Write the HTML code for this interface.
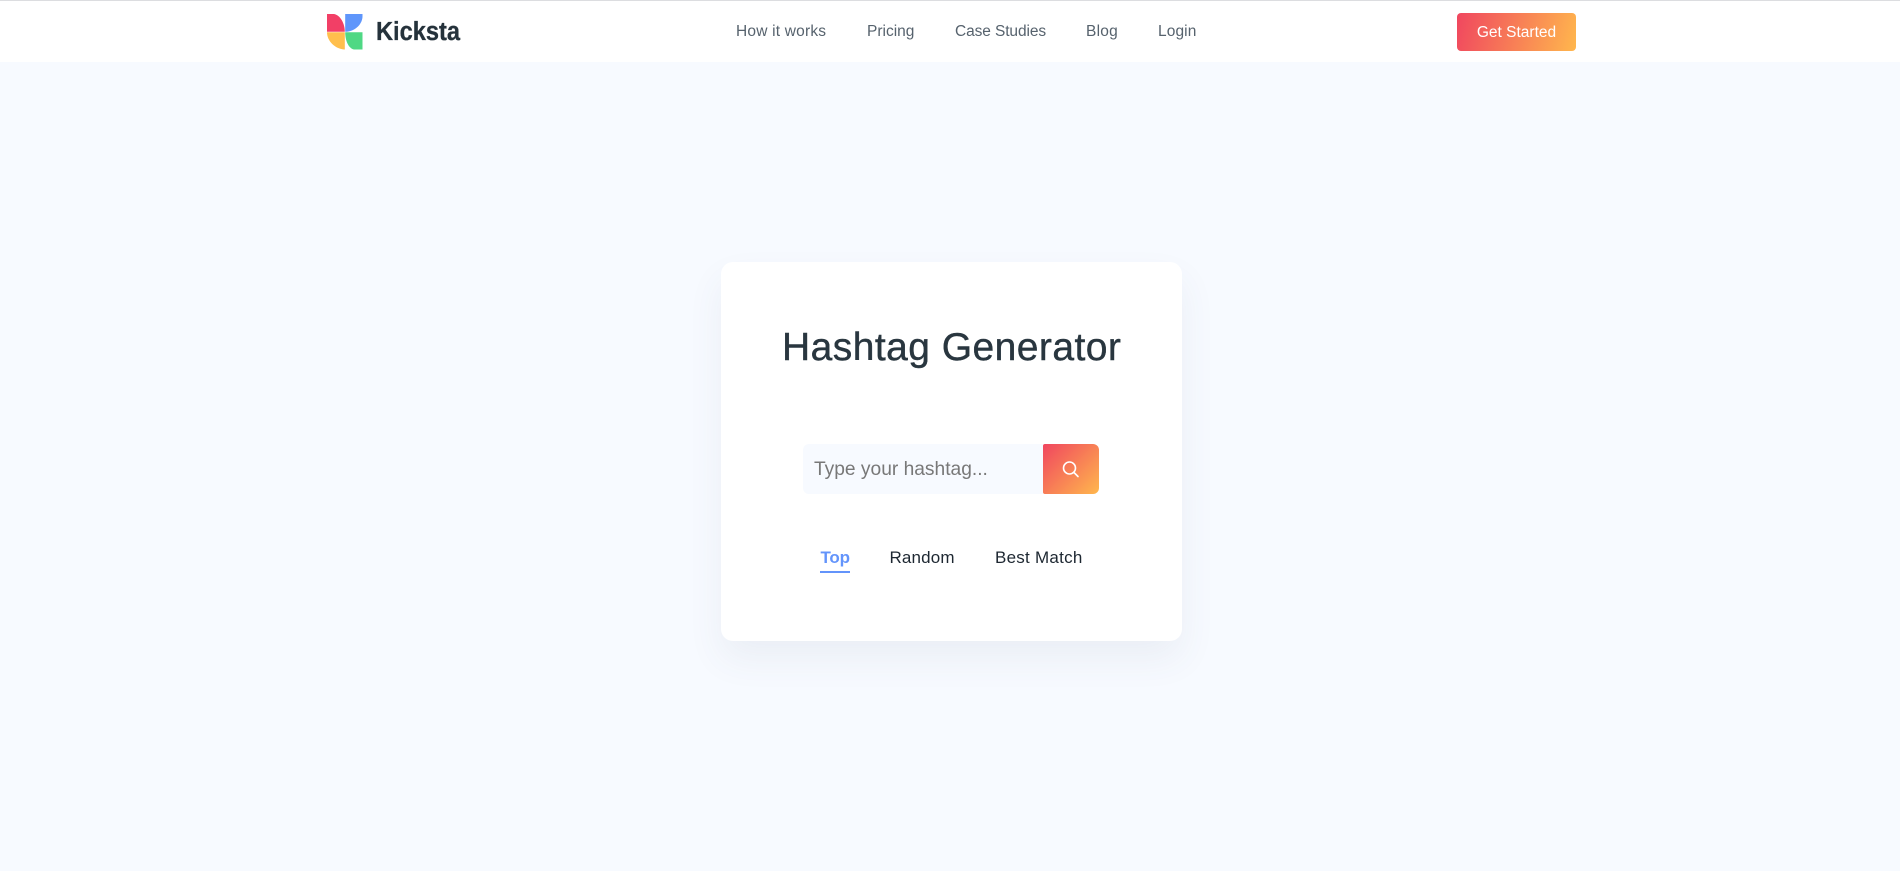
<!DOCTYPE html>
<html lang="en">
<head>
<meta charset="utf-8">
<title>Hashtag Generator - Kicksta</title>
<style>
*{box-sizing:border-box;margin:0;padding:0}
html,body{width:1900px;height:871px;overflow:hidden}
body{background:#f7faff;font-family:"Liberation Sans",sans-serif;position:relative}
a{text-decoration:none;color:inherit}
.t{position:absolute;white-space:nowrap;line-height:20px}
header{position:absolute;left:0;top:0;width:1900px;height:62px;background:#fff;border-top:1px solid #dcdde0}
.nav{color:#56626d;font-size:15.5px;top:22px}
.logo{position:absolute;left:327px;top:14px}
.word{position:absolute;left:375px;top:14px}
.cta{position:absolute;left:1457px;top:13px;width:119px;height:38px;border-radius:4px;background:linear-gradient(105deg,#f0465f,#ffb74d);color:#fff;font-size:15.5px;line-height:39px;text-align:center}
.card{position:absolute;left:721px;top:262px;width:461px;height:379px;background:#fff;border-radius:12px;box-shadow:0 18px 36px rgba(70,90,120,.07)}
h1{position:absolute;left:782px;top:325px;font-weight:400;font-size:39px;line-height:46px;color:#29363f;white-space:nowrap;letter-spacing:.45px;-webkit-text-stroke:.4px #29363f}
.field{position:absolute;left:803px;top:444px;width:240px;height:50px;background:#f7faff;border-radius:6px 0 0 6px}
.ph{left:814px;top:460px;font-size:19.2px;color:#787878}
.go{position:absolute;left:1043px;top:444px;width:56px;height:50px;border-radius:2px 6px 6px 2px;background:linear-gradient(135deg,#f0465f,#ffb74d)}
.tab{top:548px;font-size:17px;color:#1d2731}
.tab.on{color:#6394fb;font-weight:700}
.ul{position:absolute;left:820px;top:571px;width:30px;height:2px;background:#6394fb}
</style>
</head>
<body>
<header>
</header>
<svg class="logo" width="36" height="36" viewBox="0 0 36 36" aria-hidden="true">
<path d="M0 0H7C13 1 17.800 9 17.800 17.800H0Z" fill="#f23f66"/>
<path d="M18.200 0H35.500V3C35 11 27 17.800 18.200 17.800Z" fill="#5f96fb"/>
<path d="M0 18.200H17.800V35.500C8 35 0 27 0 18.200Z" fill="#ffbf4d"/>
<path d="M18.200 18.200H35.500V35.500H27C21 34 18.200 26 18.200 18.200Z" fill="#4fd884"/>
</svg>
<svg class="word" width="90" height="36" viewBox="0 0 90 36">
<text x="1" y="26" font-family="Liberation Sans" font-weight="700" font-size="25.500" fill="#25323b" stroke="#25323b" stroke-width=".3" textLength="84" lengthAdjust="spacingAndGlyphs">Kicksta</text>
</svg>
<a class="t nav" style="left:736px;letter-spacing:.2px">How it works</a>
<a class="t nav" style="left:867px">Pricing</a>
<a class="t nav" style="left:955px;letter-spacing:-.1px">Case Studies</a>
<a class="t nav" style="left:1086px;letter-spacing:.25px">Blog</a>
<a class="t nav" style="left:1158px;letter-spacing:.1px">Login</a>
<a class="cta">Get Started</a>

<div class="card"></div>
<h1>Hashtag Generator</h1>
<div class="field"></div>
<span class="t ph">Type your hashtag...</span>
<div class="go">
<svg width="56" height="50" viewBox="0 0 56 50" aria-hidden="true"><circle cx="26.500" cy="24" r="6" fill="none" stroke="#fff" stroke-width="1.600"/><path d="M31 28.500L35 32.500" stroke="#fff" stroke-width="1.600" stroke-linecap="round"/></svg>
</div>
<a class="t tab on" style="left:820.500px;letter-spacing:-.2px">Top</a>
<div class="ul"></div>
<a class="t tab" style="left:889.500px;letter-spacing:.15px">Random</a>
<a class="t tab" style="left:995px;letter-spacing:.25px">Best Match</a>
</body>
</html>
